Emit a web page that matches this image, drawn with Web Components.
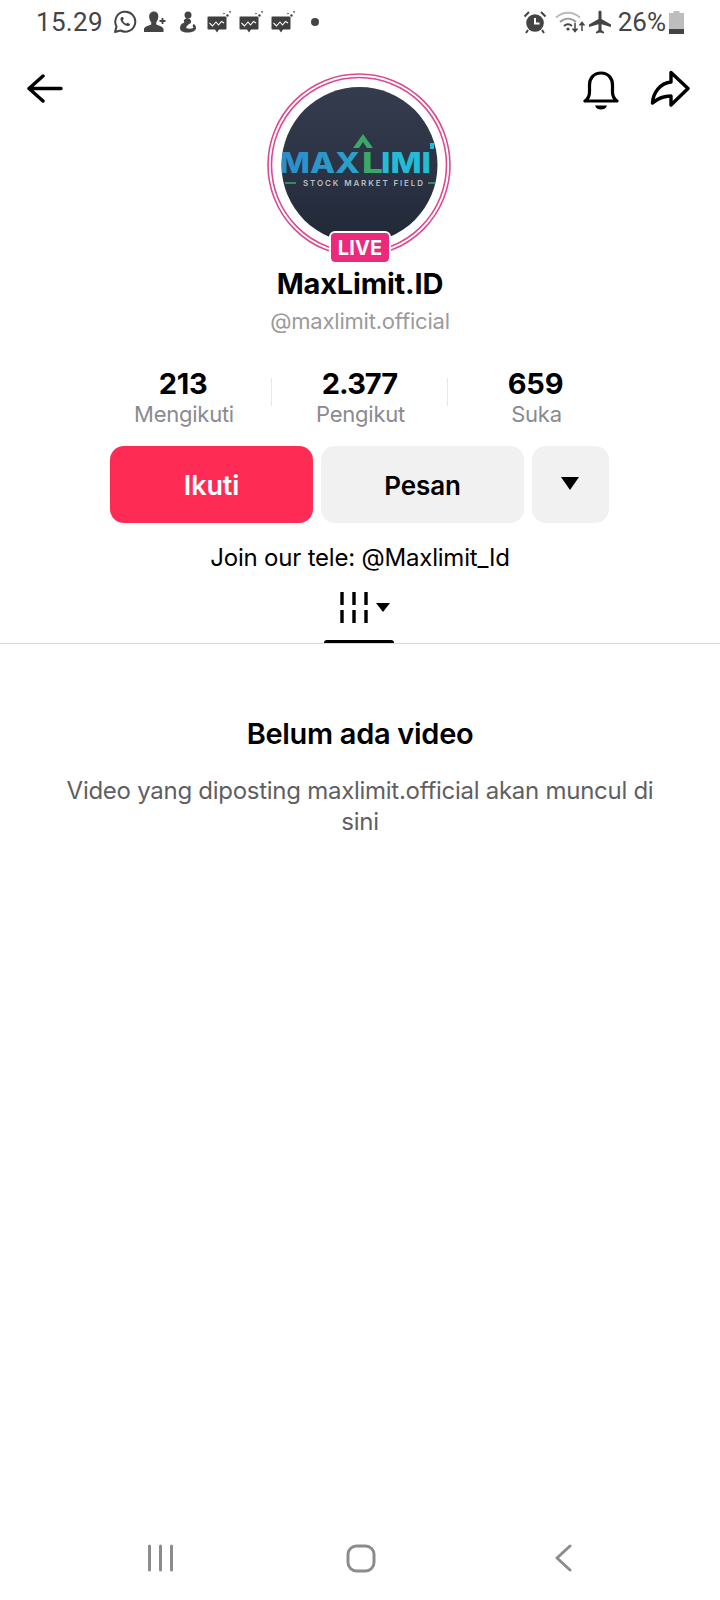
<!DOCTYPE html>
<html lang="id"><head><meta charset="utf-8"><title>MaxLimit.ID</title>
<style>
html,body{margin:0;padding:0;background:#fff}
body{font-family:Inter,Roboto,"Liberation Sans",sans-serif;color:#000}
</style></head><body>
<profile-page>
  <status-bar slot="status"></status-bar>
  <profile-head slot="main" name="MaxLimit.ID" handle="@maxlimit.official"></profile-head>
  <stat-row slot="main"></stat-row>
  <action-row slot="main"></action-row>
  <bio-line slot="main">Join our tele: @Maxlimit_Id</bio-line>
  <tab-strip slot="main"></tab-strip>
  <empty-state slot="main" heading="Belum ada video">Video yang diposting maxlimit.official akan muncul di sini</empty-state>
  <nav-bar slot="nav"></nav-bar>
</profile-page>
<script>
function comp(tag, html){
  customElements.define(tag, class extends HTMLElement{
    connectedCallback(){
      const r=this.attachShadow({mode:'open'});
      r.innerHTML=typeof html==='function'?html(this):html;
    }
  });
}
const chatIcon=`<svg width="24" height="24" viewBox="0 0 24 24"><path d="M.5 7.500q0-1 1-1h17q1 0 1 1v11q0 1-1 1h-6.500L10 22.500 8 19.500H1.500q-1 0-1-1z" fill="#3f3f3f"/><path d="M2.500 13l3 3 3.500-4 2.500 3 3-3.500 2.500 1.500" fill="none" stroke="#fff" stroke-width="1.100"/><g fill="#444"><circle cx="20.500" cy="5.500" r="1.200"/><circle cx="23" cy="1.800" r=".9"/><circle cx="17" cy="3.500" r=".8"/></g></svg>`;

comp('profile-page',`<style>
:host{display:flex;flex-direction:column;width:720px;height:1600px;background:#fff;overflow:hidden}
main{flex:1;display:flex;flex-direction:column}
</style><slot name="status"></slot><main><slot name="main"></slot></main><slot name="nav"></slot>`);

comp('status-bar',`<style>
:host{display:flex;align-items:center;justify-content:space-between;height:44px;padding:0 36px 0 36px;box-sizing:border-box;font-family:Roboto,"Liberation Sans",sans-serif;font-size:26px;color:#444}
div{display:flex;align-items:center}
svg{display:block;flex:none}
.time{margin-right:10px;letter-spacing:.3px}
.pct{font-size:26px;margin:0 3px 0 6px}
</style>
<div class="l">
<span class="time">15.29</span>
<svg width="24" height="24" viewBox="0 0 24 24" style="margin-right:6px"><path d="M2 22l1.500-5.500A10 10 0 1 1 7.500 20.500z" fill="none" stroke="#444" stroke-width="2" stroke-linejoin="round"/><path d="M8.500 7c-1.500 1-1.500 3 .5 5.500s4.500 4 6.500 3.500c1-.3 1.500-1 1.500-2l-2.500-1.300-1.200 1.100c-1.500-.5-3-2-3.500-3.500l1-1.200L10 7z" fill="#444"/></svg>
<svg width="26" height="26" viewBox="0 0 26 26" style="margin-right:10px"><path d="M11 2.500c3 0 4.500 2.300 4.300 5.500-.1 2.200-1 4-2 5.200v2.300c3 1.300 6.500 2.200 7.200 4.200V23H1v-3.300c.7-2 4.200-2.900 7.200-4.200v-2.300c-1-1.200-1.900-3-2-5.200C6 4.800 8 2.500 11 2.500z" fill="#444"/><path d="M19.500 9v6M16.500 12h6" stroke="#444" stroke-width="1.800"/></svg>
<svg width="18" height="24" viewBox="0 0 18 24" style="margin-right:10px"><circle cx="9" cy="5" r="3.500" fill="#444"/><path d="M8 8c-3 1-4 3-2.500 4.500C3 13 1 15 1 18c0 3 3 4.500 7.500 4.500S17 21 17 18c0-2-1-3.500-2.500-4l-1 2c.7.600 1 1.300.7 2-2 1-5 1-7 0 0-2 2-3.500 4-4.500 1.500-1 1-3.500-.5-4.500z" fill="#444"/></svg>
${chatIcon}<span style="width:8px"></span>${chatIcon}<span style="width:8px"></span>${chatIcon}
<svg width="10" height="10" viewBox="0 0 10 10" style="margin-left:15px"><circle cx="5" cy="5" r="4" fill="#444"/></svg>
</div>
<div>
<svg width="24" height="24" viewBox="0 0 24 24" style="margin-right:8px"><circle cx="12" cy="13" r="8.800" fill="#444"/><path d="M12 8v5.500h4.500" fill="none" stroke="#fff" stroke-width="2"/><path d="M1.500 6.500L6 2M22.500 6.500L18 2M5 20l-2 3M19 20l2 3" stroke="#444" stroke-width="2"/></svg>
<svg width="30" height="24" viewBox="0 0 30 24" style="margin-right:3px"><path d="M1 7.500c7-6.500 17-6.500 24 0" fill="none" stroke="#bbb" stroke-width="2"/><path d="M5 12c5-4.500 11-4.500 16 0" fill="none" stroke="#999" stroke-width="2"/><path d="M9 16c3-2.500 5-2.500 8 0" fill="none" stroke="#444" stroke-width="2"/><circle cx="13" cy="19" r="1.600" fill="#444"/><path d="M20 13v8M17.500 18.500l2.500 3 2.500-3M27 21v-8M24.500 15.500l2.500-3 2.500 3" fill="none" stroke="#444" stroke-width="1.500"/></svg>
<svg width="24" height="24" viewBox="0 0 24 24"><path d="M10.500 1.500c0-1 3-1 3 0V9l9.500 5.500V17l-9.500-2.800V20l2.500 2v1.500L12 22.500l-4 1V22l2.500-2v-5.800L1 17v-2.500L10.500 9z" fill="#444"/></svg>
<span class="pct">26%</span>
<svg width="15" height="23" viewBox="0 0 15 23"><path d="M4.500 0h6v2H15v21H0V2h4.500z" fill="#bdbdbd"/><rect y="18" width="15" height="5" fill="#444"/></svg>
</div>`);

comp('profile-head',el=>`<style>
:host{display:block}
.top{display:grid;grid-template-columns:267px 184px 1fr;padding-top:29px}
.back{margin:1px 0 0 26px}
.acts{display:flex;justify-content:flex-end;gap:31px;padding-right:30px;align-items:flex-start;margin-top:-3px}
svg{display:block}
.av{position:relative;width:184px;height:184px}
.live{position:absolute;left:64px;top:160px;box-sizing:border-box;width:58px;height:29px;background:#ec2a7c;border-radius:4px;outline:2px solid #fff;color:#fff;font:700 20px/30px Inter,Roboto,sans-serif;text-align:center;letter-spacing:.1px}
h1{margin:9px 0 0;font:700 29px/36px Inter,Roboto,sans-serif;text-align:center;letter-spacing:-.2px}
p{margin:5px 0 0;font:400 22px/28px Inter,Roboto,sans-serif;color:#9a9a9e;text-align:center;letter-spacing:-.2px}
</style>
<div class="top">
<svg class="back" width="37" height="30" viewBox="0 0 37 30"><path d="M35 14.500H4M17 2L3 14.500 17 27" fill="none" stroke="#000" stroke-width="3.400" stroke-linecap="round" stroke-linejoin="round"/></svg>
<div class="av">
<svg width="184" height="184" viewBox="0 0 184 184">
<defs>
<clipPath id="c"><circle cx="92.500" cy="92" r="78"/></clipPath>
<linearGradient id="bg" x1="0" y1="0" x2="0" y2="1"><stop offset="0" stop-color="#343c4e"/><stop offset=".55" stop-color="#2a3244"/><stop offset="1" stop-color="#212837"/></linearGradient>
<linearGradient id="lg" x1="0" y1="0" x2="1" y2="0"><stop offset="0" stop-color="#2b8ccb"/><stop offset="1" stop-color="#2aa3c8"/></linearGradient>
</defs>
<circle cx="92" cy="92" r="91" fill="none" stroke="#db4a8f" stroke-width="1.600"/>
<circle cx="92" cy="92" r="87.500" fill="none" stroke="#db4a8f" stroke-width="1.600"/>
<g clip-path="url(#c)">
<rect x="14" y="14" width="157" height="156" fill="url(#bg)"/>
<text x="12" y="100" font-family="Inter,Roboto,sans-serif" font-weight="800" font-size="28" fill="url(#lg)" textLength="81" lengthAdjust="spacingAndGlyphs">MAX</text>
<text x="95" y="100" font-family="Inter,Roboto,sans-serif" font-weight="800" font-size="28" fill="#3aa866" textLength="21" lengthAdjust="spacingAndGlyphs">L</text>
<path d="M86 75l10-14 10 14h-6l-4-6-4 6z" fill="#3aa866"/>
<text x="114" y="100" font-family="Inter,Roboto,sans-serif" font-weight="800" font-size="28" fill="#24bcd4" textLength="50" lengthAdjust="spacingAndGlyphs">IMI</text>
<path d="M163 70h4v6h-4z" fill="#24bcd4"/>
<text x="96" y="113" text-anchor="middle" font-family="Inter,Roboto,sans-serif" font-weight="600" font-size="8" fill="#b9bec8" textLength="120" lengthAdjust="spacing">STOCK MARKET FIELD</text>
<path d="M18 110h11M161 110h8" stroke="#3aa866" stroke-width="1.500"/>
</g>
</svg>
<div class="live">LIVE</div>
</div>
<div class="acts">
<svg width="36" height="40" viewBox="0 0 36 40"><path d="M2 31h32c-3-2-4.500-5-4.500-9v-7C29.500 8 25 3 18 3S6.500 8 6.500 15v7c0 4-1.500 7-4.500 9z" fill="none" stroke="#000" stroke-width="3.200" stroke-linejoin="round"/><path d="M12 35.500h12c-1 3-3.500 4-6 4s-5-1-6-4z" fill="#000"/></svg>
<svg width="40" height="38" viewBox="0 0 40 38"><path d="M21 2.500L38 18.500 21 35V26C12 26 7 29 2.500 33 3 23 10 13 21 12z" fill="none" stroke="#000" stroke-width="3.400" stroke-linejoin="round"/></svg>
</div>
</div>
<h1>${el.getAttribute('name')}</h1>
<p>${el.getAttribute('handle')}</p>`);

comp('stat-row',`<style>
:host{display:grid;grid-template-columns:176px 1px 175px 1px 176px;height:61px;margin:32px 0 0 95px;text-align:center}
b{display:block;font:700 29px/33px Inter,Roboto,sans-serif;letter-spacing:-.25px}
.n{letter-spacing:-1px}
span{display:block;font:400 22px/28px Inter,Roboto,sans-serif;color:#8a8a8e;letter-spacing:-.25px;padding-left:2px}
i{display:block;background:#e8e8e8;height:28px;margin-top:11px}
</style>
<div><b>213</b><span>Mengikuti</span></div><i></i>
<div><b class="n">2.377</b><span>Pengikut</span></div><i></i>
<div style="margin-left:-1px"><b>659</b><span>Suka</span></div>`);

comp('action-row',`<style>
:host{display:flex;gap:8px;margin:18px 0 0 110px;height:77px}
div{box-sizing:border-box;width:203px;border-radius:14px;background:#f1f1f2;display:flex;align-items:center;justify-content:center;font:600 26px/1 Inter,Roboto,sans-serif;letter-spacing:-.1px;padding-top:2px}
.p{background:#fe2c55;color:#fff;font-size:27px}
.m{width:77px;padding:0 2px 2px 0}
</style>
<div class="p">Ikuti</div><div>Pesan</div>
<div class="m"><svg width="18" height="13" viewBox="0 0 18 13"><path d="M0 0h18L9 13z" fill="#000"/></svg></div>`);

comp('bio-line',`<style>
:host{display:block;margin-top:20px;font:400 24px/30px Inter,Roboto,sans-serif;text-align:center;letter-spacing:-.2px}
</style><slot></slot>`);

comp('tab-strip',`<style>
:host{display:flex;flex-direction:column;align-items:center;height:71px;box-sizing:border-box;border-bottom:1px solid #d9d9d9}
.ic{display:flex;gap:8px;align-items:center;margin-top:19px;height:31px;margin-left:10px}
svg{display:block}
u{display:block;width:70px;height:3px;background:#000;border-radius:3px 3px 0 0;margin:17px 0 0 -2px}
</style>
<div class="ic"><svg width="28" height="31" viewBox="0 0 28 31"><path d="M2 0v13M14 0v13M26 0v13M2 18v13M14 18v13M26 18v13" stroke="#000" stroke-width="3.400"/></svg>
<svg width="14" height="9" viewBox="0 0 14 9"><path d="M0 0h14L7 9z" fill="#000"/></svg></div>
<u></u>`);

comp('empty-state',el=>`<style>
:host{display:block;text-align:center;padding:72px 60px 0}
h2{margin:0;font:600 29px/36px Inter,Roboto,sans-serif;letter-spacing:-.3px}
p{margin:23px 0 0;font:400 24px/31px Inter,Roboto,sans-serif;color:#5f5f63;letter-spacing:-.27px}
</style><h2>${el.getAttribute('heading')}</h2><p><slot></slot></p>`);

comp('nav-bar',`<style>
:host{display:flex;align-items:center;justify-content:space-between;height:88px;box-sizing:border-box;padding:4px 147px 0 147px}
svg{display:block}
</style>
<svg width="27" height="28" viewBox="0 0 27 28"><path d="M2.500 2v24M13.500 2v24M24.500 2v24" stroke="#8c8c8c" stroke-width="3" stroke-linecap="round"/></svg>
<svg width="30" height="29" viewBox="0 0 30 29" style="margin-right:6px"><rect x="2" y="2" width="26" height="25" rx="8.500" fill="none" stroke="#8c8c8c" stroke-width="3"/></svg>
<svg width="19" height="28" viewBox="0 0 19 28"><path d="M16 2L3 14l13 12" fill="none" stroke="#8c8c8c" stroke-width="3" stroke-linecap="round" stroke-linejoin="round"/></svg>`);
</script>
</body></html>
